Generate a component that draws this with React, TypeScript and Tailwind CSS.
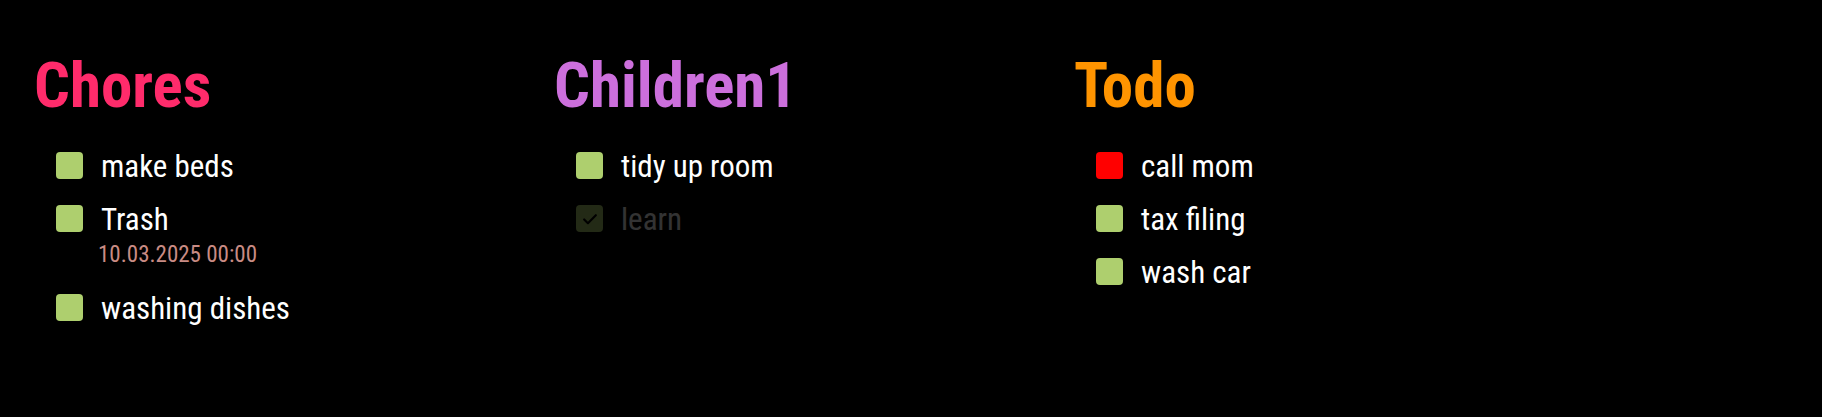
import React from 'react';

type Item = { label: string; done?: boolean; overdue?: boolean; due?: string };
type List = { title: string; color: string; items: Item[] };

const lists: List[] = [
  {
    title: 'Chores',
    color: 'text-[#ff2b6b]',
    items: [
      { label: 'make beds' },
      { label: 'Trash', due: '10.03.2025 00:00' },
      { label: 'washing dishes' },
    ],
  },
  {
    title: 'Children1',
    color: 'text-[#cc6fdc]',
    items: [{ label: 'tidy up room' }, { label: 'learn', done: true }],
  },
  {
    title: 'Todo',
    color: 'text-[#ff9400]',
    items: [{ label: 'call mom', overdue: true }, { label: 'tax filing' }, { label: 'wash car' }],
  },
];

const CheckBox: React.FC<{ done?: boolean; overdue?: boolean }> = ({ done, overdue }) => (
  <span
    className={`mt-[2px] flex h-[27px] w-[27px] shrink-0 items-center justify-center rounded-[4px] ${
      overdue ? 'bg-[#ff0000]' : 'bg-[#aecf6e]'
    }`}
  >
    {done && (
      <svg viewBox="0 0 24 24" className="h-[20px] w-[20px]" fill="none" stroke="#000" strokeWidth={2.6} strokeLinecap="round" strokeLinejoin="round">
        <path d="M5 12.5l4.5 4.5L19 7.5" />
      </svg>
    )}
  </span>
);

export default function App() {
  return (
    <div className="min-h-[417px] w-full bg-black pt-[48px] pl-[33px] font-['Roboto_Condensed','Roboto',sans-serif]">
      <div className="flex">
        {lists.map((list) => (
          <section key={list.title} className="w-[520px] shrink-0">
            <h2 className={`pl-[1px] text-[63px] font-bold leading-[75px] ${list.color}`}>{list.title}</h2>
            <ul className="mt-[27px] flex flex-col gap-[20px] pl-[23px]">
              {list.items.map((item) => (
                <li key={item.label} className={`flex items-start gap-[18px] ${item.done ? 'opacity-20' : ''}`}>
                  <CheckBox done={item.done} overdue={item.overdue} />
                  <div className="flex flex-col">
                    <span className="text-[31px] leading-[33px] text-white">{item.label}</span>
                    {item.due && (
                      <span className="-ml-[3px] mt-[6px] mb-[4px] text-[23px] leading-[26px] text-[#c98b84]">{item.due}</span>
                    )}
                  </div>
                </li>
              ))}
            </ul>
          </section>
        ))}
      </div>
    </div>
  );
}
